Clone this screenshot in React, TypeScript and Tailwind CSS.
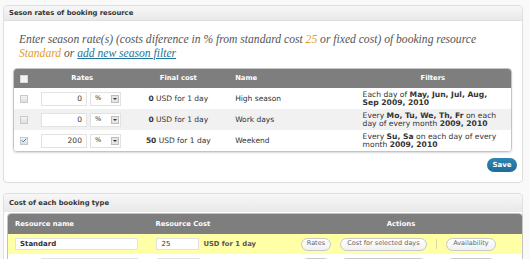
import { Check } from 'lucide-react';

const seasons = [
  {
    checked: false,
    rate: '0',
    cost: '0',
    name: 'High season',
    filter: (
      <>
        Each day of <b>May, Jun, Jul, Aug, Sep 2009, 2010</b>
      </>
    ),
  },
  {
    checked: false,
    rate: '0',
    cost: '0',
    name: 'Work days',
    filter: (
      <>
        Every <b>Mo, Tu, We, Th, Fr</b> on each day of every month <b>2009, 2010</b>
      </>
    ),
  },
  {
    checked: true,
    rate: '200',
    cost: '50',
    name: 'Weekend',
    filter: (
      <>
        Every <b>Su, Sa</b> on each day of every month <b>2009, 2010</b>
      </>
    ),
  },
];

function Box({ checked = false, dark = false }: { checked?: boolean; dark?: boolean }) {
  return (
    <span
      className={`inline-flex items-center justify-center w-[8px] h-[8px] border ${
        dark ? 'border-[#d8d8d8] bg-[#f4f4f4]' : 'border-[#c9c9c9] bg-gradient-to-b from-[#f4f4f4] to-[#dedede]'
      }`}
    >
      {checked && <Check className="w-[7px] h-[7px] text-[#3b6ea8]" strokeWidth={4} />}
    </span>
  );
}

function Pill({ children, w }: { children?: React.ReactNode; w: string }) {
  return (
    <span
      className={`${w} h-[13px] flex items-center justify-center rounded-full border border-[#c8c8c8] bg-gradient-to-b from-white to-[#f1f1f1] text-[#666] text-[6.5px]`}
    >
      {children}
    </span>
  );
}

export default function App() {
  return (
    <div className="w-[530px] h-[259px] overflow-hidden bg-[#f9f9f9] font-['DejaVu_Sans',sans-serif] text-[#333]">
      {/* Season rates panel */}
      <div className="ml-[3px] mt-[5px] w-[520px] h-[178px] border border-[#dfdfdf] rounded-[4px] bg-white">
        <div className="h-[15px] flex items-center pl-[5px] bg-gradient-to-b from-[#f7f7f7] to-[#e8e8e8] border-b border-[#dfdfdf] rounded-t-[4px] text-[6.8px] font-bold text-[#333]">
          Seson rates of booking resource
        </div>
        <p className="pl-[15px] pt-[12px] whitespace-nowrap text-[11.6px] leading-[14px] italic text-[#555] font-['Liberation_Serif',serif]">
          Enter season rate(s) (costs diference in % from standard cost <span className="text-[#e3a01f]">25</span> or fixed
          cost) of booking resource
          <br />
          <span className="text-[#e3a01f]">Standard</span> or{' '}
          <span className="text-[#21759b] underline">add new season filter</span>
        </p>

        <div className="ml-[9px] mt-[7px] w-[499px] border border-[#c4c4c4] rounded-[4px] overflow-hidden shadow-[0_1px_2px_rgba(0,0,0,0.15)]">
          <div className="flex h-[19px] items-center bg-[#7e7e7e] text-white text-[6.8px] font-bold">
            <div className="w-[20px] flex justify-center">
              <Box dark />
            </div>
            <div className="w-[97px] text-center">Rates</div>
            <div className="w-[96px] text-center">Final cost</div>
            <div className="w-[129px] pl-[9px]">Name</div>
            <div className="w-[157px] text-center">Filters</div>
          </div>
          {seasons.map((s, i) => (
            <div key={i} className={`flex items-center h-[21px] text-[7px] ${i === 1 ? 'bg-[#f1f1f1]' : 'bg-white'}`}>
              <div className="w-[20px] flex justify-center">
                <Box checked={s.checked} />
              </div>
              <div className="w-[97px] flex items-center pl-[7px] gap-[3px]">
                <span className="w-[46px] h-[14px] border border-[#e2e2e2] bg-white flex items-center justify-end pr-[4px] text-[7.5px]">
                  {s.rate}
                </span>
                <span className="w-[31px] h-[14px] border border-[#e2e2e2] bg-white flex items-center justify-between pl-[4px] pr-[1px] text-[6.5px]">
                  %
                  <span className="w-[8px] h-[8px] border border-[#bdbdbd] bg-[#e6e6e6] flex items-center justify-center">
                    <span className="w-0 h-0 border-l-[2px] border-r-[2px] border-t-[2px] border-l-transparent border-r-transparent border-t-[#333]" />
                  </span>
                </span>
              </div>
              <div className="w-[96px] text-center text-[7.5px]">
                <b>{s.cost}</b> USD for 1 day
              </div>
              <div className="w-[129px] pl-[9px] text-[7.5px]">{s.name}</div>
              <div className="w-[157px] pl-[8px] pr-[9px] text-[7.6px] leading-[8px]">{s.filter}</div>
            </div>
          ))}
        </div>

        <div className="flex justify-end pr-[5px] mt-[6px]">
          <button className="w-[30px] h-[14px] rounded-full bg-gradient-to-b from-[#2e86b4] to-[#1d6c94] text-white text-[7px] font-bold">
            Save
          </button>
        </div>
      </div>

      {/* Cost panel */}
      <div className="ml-[3px] mt-[10px] w-[520px] h-[80px] border border-[#dfdfdf] rounded-t-[4px] bg-white">
        <div className="h-[18px] flex items-center pl-[5px] bg-gradient-to-b from-[#f7f7f7] to-[#e8e8e8] rounded-t-[4px] text-[6.8px] font-bold text-[#333]">
          Cost of each booking type
        </div>
        <div className="ml-[3px] mt-[1px] w-[516px] border border-[#c4c4c4] rounded-t-[4px] overflow-hidden">
          <div className="flex h-[20px] items-center bg-[#7e7e7e] text-white text-[6.8px] font-bold">
            <div className="w-[141px] pl-[7px]">Resource name</div>
            <div className="w-[132px] pl-[7px]">Resource Cost</div>
            <div className="w-[243px] text-center">Actions</div>
          </div>
          <div className="flex h-[20px] items-center bg-[#ffffa6]">
            <div className="w-[141px] pl-[7px]">
              <span className="w-[123px] h-[12px] border border-[#e2e2e2] bg-white flex items-center pl-[4px] text-[7px] font-bold">
                Standard
              </span>
            </div>
            <div className="w-[132px] pl-[8px] flex items-center gap-[4px]">
              <span className="w-[43px] h-[12px] border border-[#e2e2e2] bg-white flex items-center pl-[4px] text-[7px]">
                25
              </span>
              <span className="text-[6.8px] font-bold text-[#555]">USD for 1 day</span>
            </div>
            <div className="w-[243px] flex items-center pl-[21px] gap-[9px]">
              <Pill w="w-[30px]">Rates</Pill>
              <Pill w="w-[87px]">Cost for selected days</Pill>
              <span className="w-px h-[10px] bg-[#d8d8a0]" />
              <Pill w="w-[50px]">Availability</Pill>
            </div>
          </div>
          <div className="flex h-[20px] items-center bg-white">
            <div className="w-[141px] pl-[33px]">
              <span className="block w-[97px] h-[12px] border border-[#e2e2e2] bg-white" />
            </div>
            <div className="w-[132px] pl-[8px]">
              <span className="block w-[43px] h-[12px] border border-[#e2e2e2] bg-white" />
            </div>
            <div className="w-[243px] flex items-center pl-[21px] gap-[9px]">
              <Pill w="w-[30px]" />
              <Pill w="w-[87px]" />
              <span className="w-px h-[10px] bg-[#ddd]" />
              <Pill w="w-[50px]" />
            </div>
          </div>
        </div>
      </div>
    </div>
  );
}
